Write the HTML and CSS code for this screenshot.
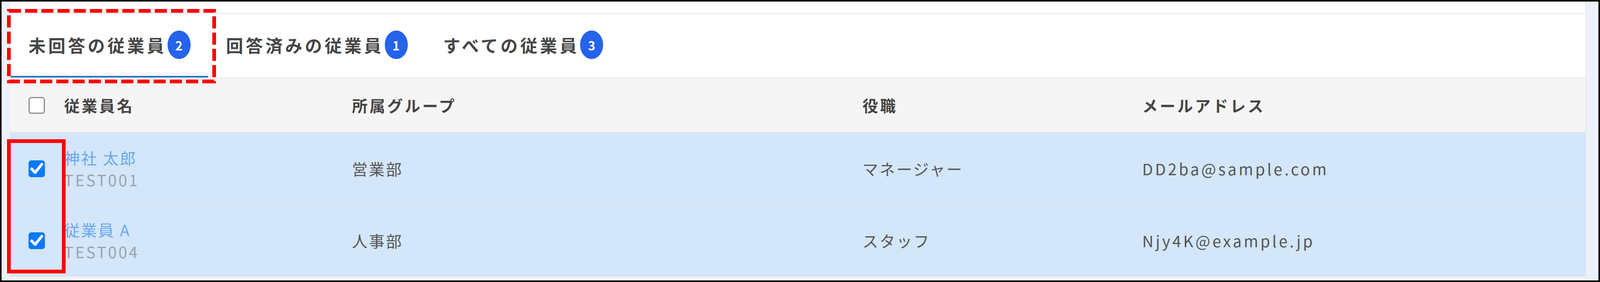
FILE: index.html
```html
<!DOCTYPE html>
<html lang="ja">
<head>
<meta charset="utf-8">
<title>従業員一覧</title>
<link rel="stylesheet" href="styles.css">
</head>
<body>
<div class="frame">
  <div class="card">
    <div class="card-top"></div>
    <div class="tabs">
      <div class="tab active"><span class="tab-label">未回答の従業員</span><span class="badge">2</span></div>
      <div class="tab"><span class="tab-label">回答済みの従業員</span><span class="badge">1</span></div>
      <div class="tab"><span class="tab-label">すべての従業員</span><span class="badge">3</span></div>
    </div>
    <div class="table">
      <div class="row head">
        <div class="cell check"><span class="cb"></span></div>
        <div class="cell">従業員名</div>
        <div class="cell">所属グループ</div>
        <div class="cell">役職</div>
        <div class="cell">メールアドレス</div>
      </div>
      <div class="row selected">
        <div class="cell check"><span class="cb on"><svg viewBox="0 0 42 43"><polyline points="8,22 17,31 34,10"/></svg></span></div>
        <div class="cell name"><span class="emp-name">神社 太郎</span><span class="emp-code">TEST001</span></div>
        <div class="cell">営業部</div>
        <div class="cell">マネージャー</div>
        <div class="cell latin">DD2ba@sample.com</div>
      </div>
      <div class="row selected">
        <div class="cell check"><span class="cb on"><svg viewBox="0 0 42 43"><polyline points="8,22 17,31 34,10"/></svg></span></div>
        <div class="cell name"><span class="emp-name">従業員 A</span><span class="emp-code">TEST004</span></div>
        <div class="cell">人事部</div>
        <div class="cell">スタッフ</div>
        <div class="cell latin">Njy4K@example.jp</div>
      </div>
      <div class="row tail"></div>
    </div>
  </div>
  <svg class="marks" viewBox="0 0 4408 721" preserveAspectRatio="none">
    <rect class="dash" x="22.75" y="27.75" width="525.5" height="180.5"/>
    <rect class="solid" x="22.75" y="360.75" width="140.5" height="333.5"/>
  </svg>
</div>
</body>
</html>
```

FILE: styles.css
```css
* { box-sizing: border-box; }
html, body {
  margin: 0;
  padding: 0;
  width: 100%;
  height: 100%;
  overflow: hidden;
}
body {
  font-family: "Noto Sans CJK JP", "Noto Sans", sans-serif;
  background: #fff;
}
.frame {
  position: relative;
  width: 100%;
  height: 100%;
  border: 4px solid #000;
  background: #edf2fa;
  padding: 0 31px 0 21px;
  overflow: hidden;
}
.card {
  height: 100%;
  background: #fff;
  border-left: 1px solid #e4e8ee;
  border-right: 2px solid #e4e8ee;
  display: flex;
  flex-direction: column;
}
.card-top {
  height: 31px;
  border-bottom: 2px solid #e6e8ee;
  flex: none;
}
.tabs {
  height: 165px;
  flex: none;
  display: flex;
  padding-left: 1px;
  border-bottom: 2px solid #e8e8e8;
}
.tab {
  display: flex;
  align-items: center;
  padding: 0 45px 0 46px;
  border-bottom: 4px solid transparent;
  color: #464646;
  font-weight: 700;
  font-size: 44px;
  letter-spacing: 6.5px;
}
.tab.active { border-bottom-color: #0a78c2; }
.tab-label { margin-right: 2px; }
.badge {
  flex: none;
  width: 59px;
  height: 73px;
  border-radius: 50%;
  background: #2563eb;
  color: #fff;
  font-size: 32px;
  font-weight: 700;
  letter-spacing: 0;
  display: flex;
  align-items: center;
  justify-content: center;
}
.table { flex: 1; display: flex; flex-direction: column; }
.row {
  display: grid;
  grid-template-columns: 138px 737px 1307px 716px 1fr;
  align-items: center;
  font-size: 40px;
  letter-spacing: 3.5px;
  color: #555;
}
.row.head {
  height: 140px;
  background: #f5f5f5;
  border-bottom: 2px solid #e3e3e3;
  font-weight: 700;
  color: #444;
  letter-spacing: 5px;
}
.row.selected {
  height: 184px;
  background: #d3e6fa;
  border-bottom: 2px solid #dfe4ea;
}
.row.tail { flex: 1; background: #f3f4f6; }
.cell { white-space: nowrap; }
.cell.latin { letter-spacing: 5.5px; }
.cell.check { padding-left: 47px; display: flex; align-items: center; }
.cb {
  width: 42px;
  height: 43px;
  border-radius: 7px;
  border: 3px solid #8c8c8c;
  background: #fff;
  display: block;
}
.cb.on { border: none; background: #0b7af5; }
.cb svg { width: 42px; height: 43px; display: block; }
.cb polyline { fill: none; stroke: #fff; stroke-width: 7; stroke-linecap: round; stroke-linejoin: round; }
.cell.name { display: flex; flex-direction: column; line-height: 56px; }
.emp-name { color: #68a8f2; }
.emp-code { color: #9da3aa; letter-spacing: 4.5px; }
.marks {
  position: absolute;
  left: -4px;
  top: -4px;
  width: 4408px;
  height: 721px;
  pointer-events: none;
}
.marks rect { fill: none; stroke: #ff0000; stroke-width: 9.5; }
.marks .dash { stroke-dasharray: 31 10.5; }
```
